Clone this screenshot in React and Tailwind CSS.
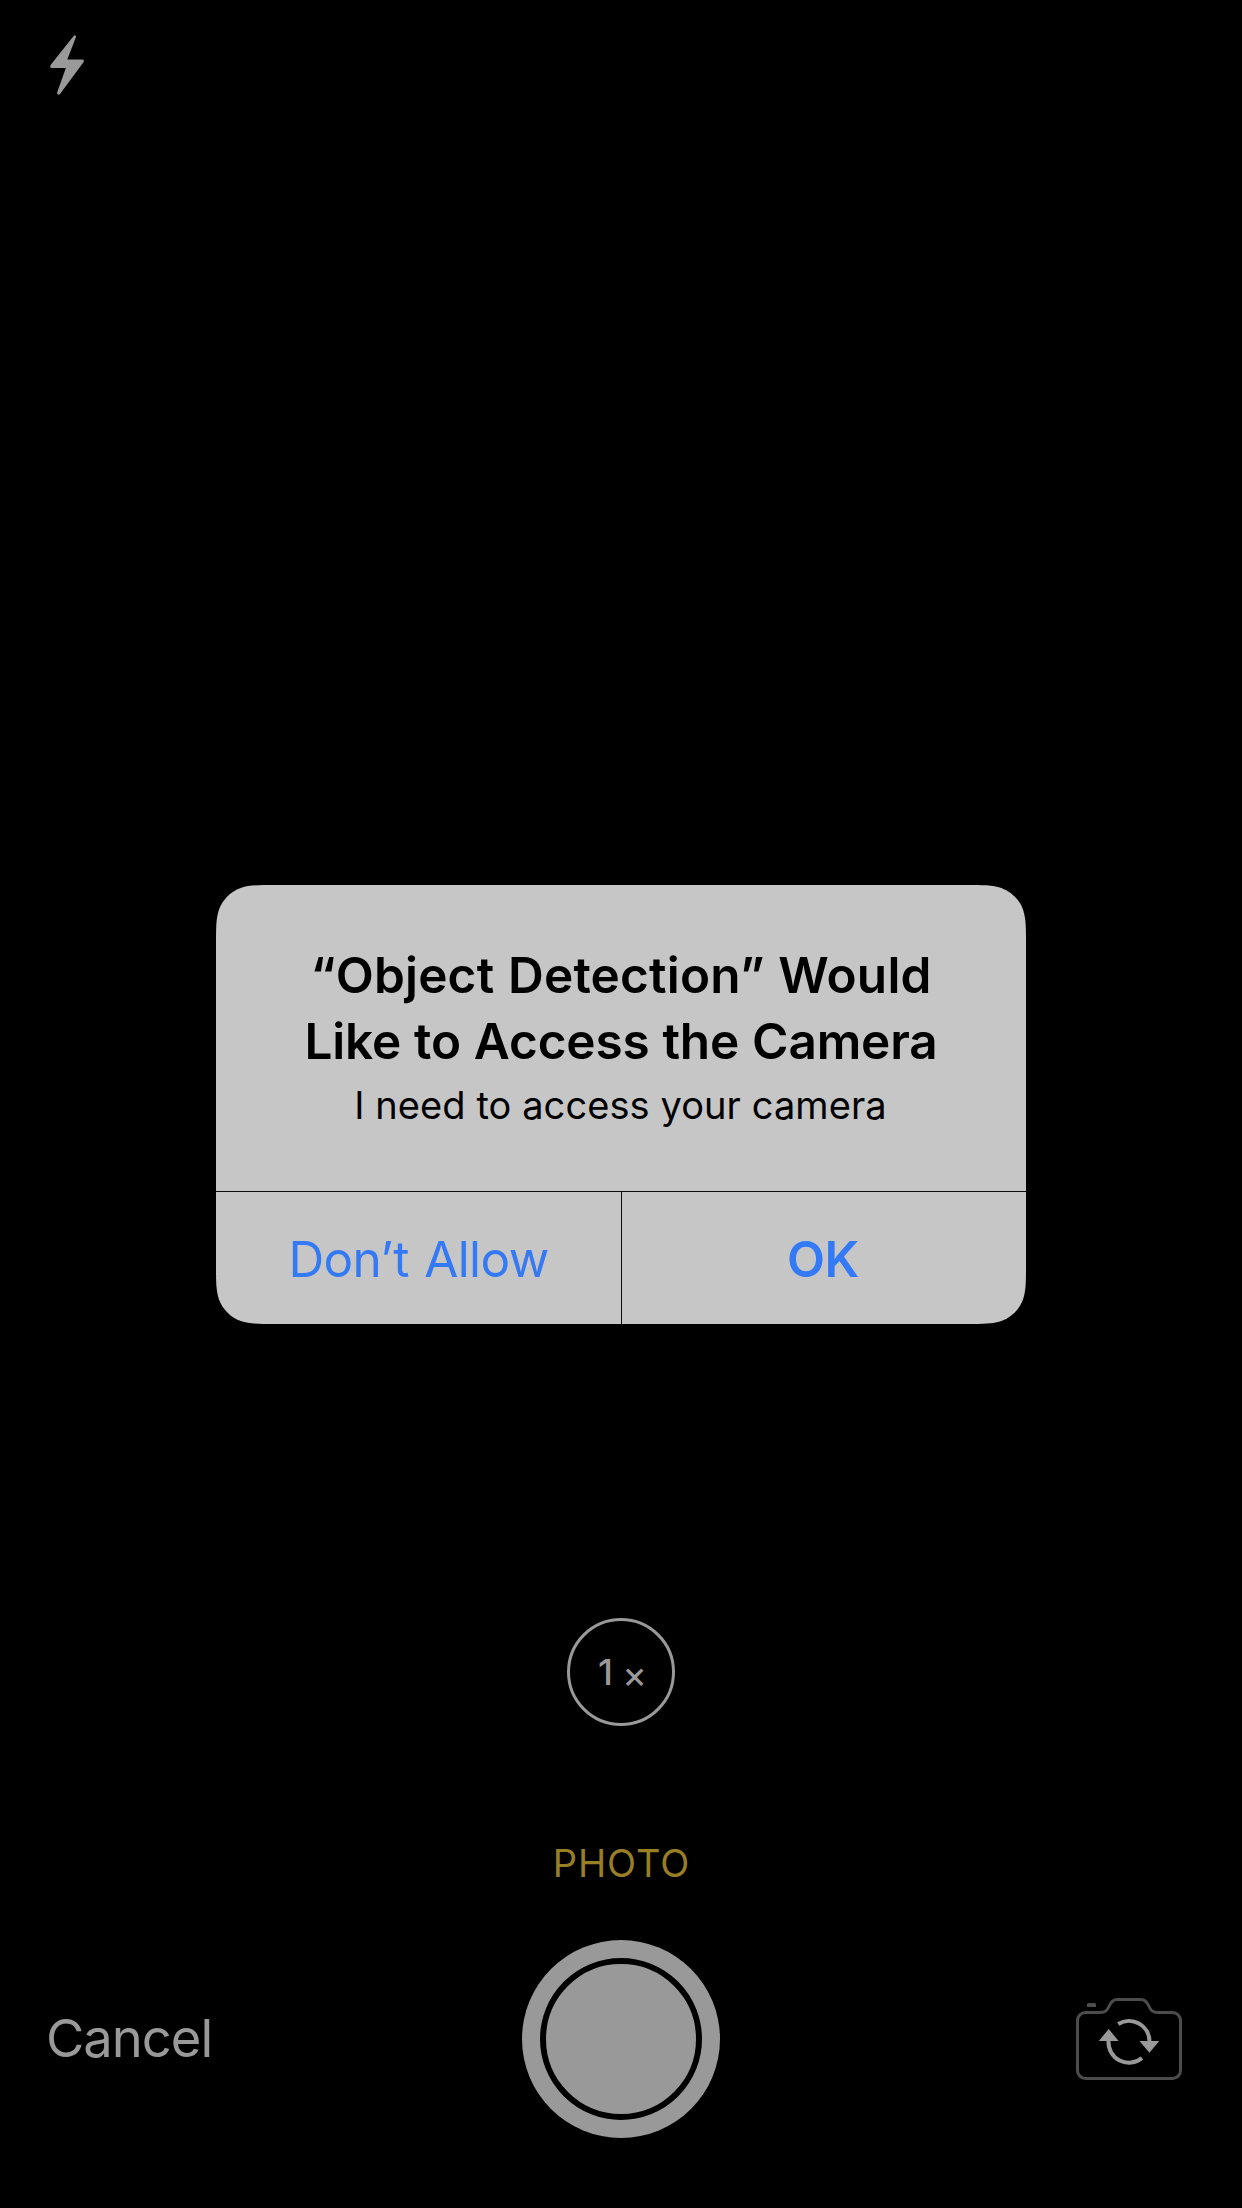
import React from "react";

function FlashIcon() {
  return (
    <svg width="34" height="60" viewBox="0 0 34 60" fill="#999999" aria-hidden="true">
      <path d="M23.4 1.2 Q24.6 0 25.5 0.5 Q26.3 1.1 25.8 2.4 L17.3 24.5 H32.2 Q33.7 24.5 33.9 25.8 Q33.9 26.7 33.1 27.8 L10.4 58.4 Q9.2 59.9 8 59.6 Q6.8 59.2 7.1 57.6 L15.9 33 H1.8 Q0.3 32.9 0.2 31.4 Q0.2 30.4 1 29.4 Z" />
    </svg>
  );
}

function FlipCameraIcon() {
  return (
    <svg width="106" height="82" viewBox="0 0 106 82" fill="none" aria-hidden="true">
      <path
        d="M9.5 14.5 H24 C29.5 14.5 31.3 12.2 33.2 8 C35.2 3.6 37 1.5 41 1.5 H65 C69 1.5 70.8 3.6 72.8 8 C74.7 12.2 76.5 14.5 82 14.5 H96.5 A8 8 0 0 1 104.5 22.5 V72.5 A8 8 0 0 1 96.5 80.5 H9.5 A8 8 0 0 1 1.5 72.5 V22.5 A8 8 0 0 1 9.5 14.5 Z"
        stroke="#4c4c4c"
        strokeWidth="3"
      />
      <path d="M12 5 H19 L20 6 V9 H11 V6 Z" fill="#4c4c4c" />
      <path d="M42.2 26 A20.5 20.5 0 0 1 73.5 43.5" stroke="#999999" strokeWidth="4" />
      <path d="M32.5 43 A20.5 20.5 0 0 0 66 60" stroke="#999999" strokeWidth="4" />
      <path d="M63.5 43 H83.3 L73.4 54.8 Z" fill="#999999" />
      <path d="M22.8 43 H42.6 L32.7 31 Z" fill="#999999" />
    </svg>
  );
}

function PermissionDialog() {
  return (
    <div className="absolute inset-0 flex items-start justify-center pt-[885px]">
      <div
        role="alertdialog"
        className="flex h-[439px] w-[810px] flex-col bg-[#c6c6c6] [clip-path:path('M0_59.6C0_42.45_0_33.87_2.92_24.63C6.59_14.54_14.54_6.59_24.63_2.92C33.87_0_42.45_0_59.6_0L750.4_0C767.55_0_776.13_0_785.37_2.92C795.46_6.59_803.41_14.54_807.08_24.63C810_33.87_810_42.45_810_59.6L810_379.4C810_396.55_810_405.13_807.08_414.37C803.41_424.46_795.46_432.41_785.37_436.08C776.13_439_767.55_439_750.4_439L59.6_439C42.45_439_33.87_439_24.63_436.08C14.54_432.41_6.59_424.46_2.92_414.37C0_405.13_0_396.55_0_379.4Z')]"
      >
        <div className="h-[306px] pt-[57px] text-center text-black">
          <h1 className="text-[49.5px] leading-[66px] font-semibold">
            <span className="block tracking-[0.2px] [word-spacing:1px]">“Object Detection” Would</span>
            <span className="block tracking-[-0.15px] [word-spacing:0.6px]">Like to Access the Camera</span>
          </h1>
          <p className="mt-1.5 pr-px text-[38px] leading-[50px] tracking-[0.08px]">
            I need to access your camera
          </p>
        </div>
        <div className="flex flex-1 border-t border-[#0c0c0c] text-[49.5px] leading-[66px] text-[#347af6]">
          <button className="w-[405px] pt-0.5 tracking-[-0.6px] [word-spacing:2px]">Don’t Allow</button>
          <button className="flex-1 border-l border-[#0c0c0c] pt-0.5 pr-0.5 font-semibold tracking-[-0.5px]">
            OK
          </button>
        </div>
      </div>
    </div>
  );
}

export default function App() {
  return (
    <div className="relative flex h-[2208px] w-[1242px] flex-col overflow-hidden bg-black font-['Inter','Liberation_Sans',sans-serif] text-[#999999]">
      <header className="pt-[35px] pl-[50px]">
        <FlashIcon />
      </header>

      <main className="flex flex-1 flex-col items-center justify-end">
        <div className="flex size-[108px] items-center gap-[9px] rounded-full border-3 border-[#999999] pl-[28px]">
          <span className="text-[36px] leading-[44px] font-medium">1</span>
          <span className="relative top-[2px] text-[38px] leading-[44px]">×</span>
        </div>
        <div className="mt-[114px] pl-px text-[38px] leading-[46px] tracking-[0.9px] text-[#987e25]">PHOTO</div>
      </main>

      <footer className="mt-[54px] mb-[70px] grid h-[198px] grid-cols-3 items-center px-[60px]">
        <button className="mb-0.5 -ml-[14px] justify-self-start text-[52.5px] leading-[64px] tracking-[-1px]">
          Cancel
        </button>
        <button className="flex size-[198px] items-center justify-center justify-self-center rounded-full bg-[#999999]">
          <span className="size-[162px] rounded-full border-6 border-black" />
        </button>
        <button className="justify-self-end">
          <FlipCameraIcon />
        </button>
      </footer>

      <PermissionDialog />
    </div>
  );
}
